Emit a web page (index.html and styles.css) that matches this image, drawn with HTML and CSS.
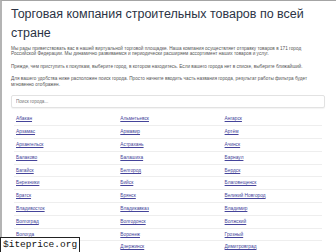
FILE: index.html
```html
<!DOCTYPE html>
<html lang="ru">
<head>
    <meta charset="UTF-8">
    <meta name="viewport" content="width=device-width, initial-scale=1.0">
    <title>Торговая компания строительных товаров</title>
    <link rel="stylesheet" href="styles.css">
</head>
<body>
    <div class="page">
        <h1 class="title">Торговая компания строительных товаров по всей стране</h1>

        <p class="intro">Мы рады приветствовать вас в нашей виртуальной торговой площадке. Наша компания осуществляет отправку товаров в 171 город Российской Федерации. Мы динамично развиваемся и периодически расширяем ассортимент наших товаров и услуг.</p>
        <p class="intro">Прежде, чем приступить к покупкам, выберите город, в котором находитесь. Если вашего города нет в списке, выберите ближайший.</p>
        <p class="intro">Для вашего удобства ниже расположен поиск города. Просто начните вводить часть названия города, результат работы фильтра будет мгновенно отображен.</p>

        <input type="text" class="city-search" placeholder="Поиск города...">

        <div class="city-list">
            <div class="city-row"><a href="#">Абакан</a><a href="#">Альметьевск</a><a href="#">Ангарск</a></div>
            <div class="city-row"><a href="#">Арзамас</a><a href="#">Армавир</a><a href="#">Артём</a></div>
            <div class="city-row"><a href="#">Архангельск</a><a href="#">Астрахань</a><a href="#">Ачинск</a></div>
            <div class="city-row"><a href="#">Балаково</a><a href="#">Балашиха</a><a href="#">Барнаул</a></div>
            <div class="city-row"><a href="#">Батайск</a><a href="#">Белгород</a><a href="#">Бердск</a></div>
            <div class="city-row"><a href="#">Березники</a><a href="#">Бийск</a><a href="#">Благовещенск</a></div>
            <div class="city-row"><a href="#">Братск</a><a href="#">Брянск</a><a href="#">Великий Новгород</a></div>
            <div class="city-row"><a href="#">Владивосток</a><a href="#">Владикавказ</a><a href="#">Владимир</a></div>
            <div class="city-row"><a href="#">Волгоград</a><a href="#">Волгодонск</a><a href="#">Волжский</a></div>
            <div class="city-row"><a href="#">Вологда</a><a href="#">Воронеж</a><a href="#">Грозный</a></div>
            <!-- first cell of this row sits under the stamp -->
            <div class="city-row"><span></span><a href="#">Дзержинск</a><a href="#">Димитровград</a></div>
        </div>
    </div>

    <div class="stamp">$iteprice.org</div>
</body>
</html>
```

FILE: styles.css
```css
body {
    font-family: "Liberation Sans", Arial, sans-serif;
    background-color: #ffffff;
    margin: 0;
    padding: 0;
    overflow: hidden;
}

.page {
    border-top: 1px solid #a4a4a4;
    border-left: 2px solid #b4b4b4;
    padding: 0 11px 0 9px;
    min-height: 260px;
}

.title {
    font-size: 12.5px;
    line-height: 19px;
    font-weight: normal;
    color: #2b3345;
    margin: 3.5px 0 0;
}

.intro {
    font-size: 4.7px;
    line-height: 5.6px;
    color: #555;
    margin: 6.8px 0 0;
}

.title + .intro {
    margin-top: 3.4px;
}

.city-search {
    display: block;
    box-sizing: border-box;
    width: 100%;
    height: 13px;
    margin: 7.3px 0 0;
    padding: 0 4px;
    font-family: inherit;
    font-size: 4.6px;
    color: #777;
    border: 1px solid #e2e2e2;
    border-radius: 2px;
    box-shadow: 0 1px 1px rgba(0, 0, 0, 0.05);
    outline: none;
}

.city-search::placeholder {
    color: #777;
}

.city-list {
    margin: 4.6px 3px 0;
}

.city-row {
    display: grid;
    grid-template-columns: 104.3px 104.3px 1fr;
    align-items: center;
    height: 12.8px;
}

.city-row + .city-row {
    border-top: 1px solid #eeeeee;
    box-sizing: border-box;
}

.city-row a {
    padding-left: 2px;
    font-size: 4.8px;
    line-height: 5.6px;
    color: #45449a;
    text-decoration: underline;
}

.stamp {
    position: absolute;
    left: 0;
    top: 237px;
    padding: 1px 2px 4px 2px;
    background: #fff;
    border: 1px solid #222;
    font-family: "Liberation Mono", "DejaVu Sans Mono", monospace;
    font-size: 9.5px;
    line-height: 11px;
    color: #111;
}
```
